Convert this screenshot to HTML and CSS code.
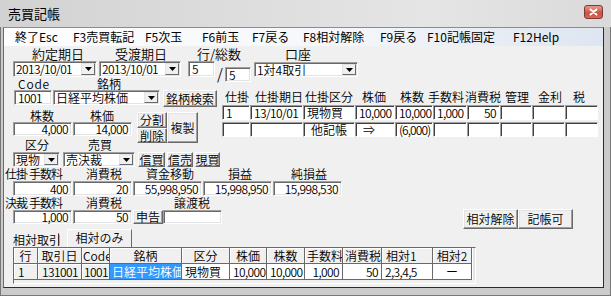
FILE: index.html
```html
<!DOCTYPE html>
<html lang="ja">
<head>
<meta charset="utf-8">
<title>売買記帳</title>
<link rel="stylesheet" href="styles.css">
</head>
<body>
<div class="window">
  <div class="titlebar">
    <span class="title">売買記帳</span>
    <span class="close"><svg width="9" height="8" viewBox="0 0 9 8"><path d="M1.5 1.5 L7.5 6.5 M7.5 1.5 L1.5 6.5" stroke="#fff" stroke-width="2" stroke-linecap="round"/></svg></span>
  </div>
  <div class="frame">
    <div class="client">
      <div class="menubar">
        <span class="mi w58">終了Esc</span>
        <span class="mi w72">F3売買転記</span>
        <span class="mi w57">F5次玉</span>
        <span class="mi w50">F6前玉</span>
        <span class="mi w51">F7戻る</span>
        <span class="mi w77">F8相対解除</span>
        <span class="mi w47">F9戻る</span>
        <span class="mi w86">F10記帳固定</span>
        <span class="mi">F12Help</span>
      </div>

      <div class="form">
      <div class="row-a">
        <span class="la w83">約定期日</span><span class="la w82">受渡期日</span><span class="la w88">行/総数</span><span class="la">口座</span>
      </div>

      <div class="row-b">
        <div class="combo c-date1"><span class="ctext n">2013/10/01</span><span class="dd"><svg width="7" height="4" viewBox="0 0 7 4"><path d="M0 0H7L3.5 4Z"/></svg></span></div>
        <div class="combo c-date2"><span class="ctext n">2013/10/01</span><span class="dd"><svg width="7" height="4" viewBox="0 0 7 4"><path d="M0 0H7L3.5 4Z"/></svg></span></div>
        <div class="field f-row">5</div>
        <span class="slash">/</span>
        <div class="field f-total">5</div>
        <div class="combo c-acct"><span class="ctext">1対4取引</span><span class="dd"><svg width="7" height="4" viewBox="0 0 7 4"><path d="M0 0H7L3.5 4Z"/></svg></span></div>
      </div>

      <div class="mid">
        <div class="left-col">
          <div class="row-c"><span class="lb code-l">Code</span><span class="lb">銘柄</span></div>
          <div class="row-d">
            <div class="field n f-code">1001</div>
            <div class="combo c-name"><span class="ctext">日経平均株価</span><span class="dd"><svg width="7" height="4" viewBox="0 0 7 4"><path d="M0 0H7L3.5 4Z"/></svg></span></div>
            <div class="btn b-search">銘柄検索</div>
          </div>
          <div class="ef">
            <div class="ef-left">
              <div class="row-e"><span class="lb w60">株数</span><span class="lb">株価</span></div>
              <div class="row-f"><div class="field n num w59">4,000</div><div class="field n num w59 ml1">14,000</div></div>
              <div class="row-g"><span class="lb w63">区分</span><span class="lb">売買</span></div>
            </div>
            <div class="ef-btns">
              <div class="btn">分割</div>
              <div class="btn b-dup">複製</div>
              <div class="btn">削除</div>
            </div>
          </div>
          <div class="row-h">
            <div class="combo c-kind"><span class="ctext">現物</span><span class="dd"><svg width="7" height="4" viewBox="0 0 7 4"><path d="M0 0H7L3.5 4Z"/></svg></span></div>
            <div class="combo c-trade"><span class="ctext">売決裁</span><span class="dd"><svg width="7" height="4" viewBox="0 0 7 4"><path d="M0 0H7L3.5 4Z"/></svg></span></div>
            <div class="btn b-s1">信買</div>
            <div class="btn b-s2">信売</div>
            <div class="btn b-s3">現買</div>
          </div>
        </div>

        <div class="right-col">
          <div class="t-head">
            <span class="th w30">仕掛</span><span class="th w50">仕掛期日</span><span class="th w57">仕掛区分</span><span class="th w38">株価</span><span class="th w28">株数</span><span class="th w37">手数料</span><span class="th w40">消費税</span><span class="th w33">管理</span><span class="th w35">金利</span><span class="th">税</span>
          </div>
          <div class="t-row">
            <div class="tc n">1</div>
            <div class="tc n">13/10/01</div>
            <div class="tc">現物買</div>
            <div class="tc n num">10,000</div>
            <div class="tc n num">10,000</div>
            <div class="tc n num">1,000</div>
            <div class="tc n num">50</div>
            <div class="tc"></div>
            <div class="tc"></div>
            <div class="tc"></div>
          </div>
          <div class="t-row">
            <div class="tc"></div>
            <div class="tc"></div>
            <div class="tc ctr">他記帳</div>
            <div class="tc pl7">⇒</div>
            <div class="tc n tight">(6,000)</div>
            <div class="tc"></div>
            <div class="tc"></div>
            <div class="tc"></div>
            <div class="tc"></div>
            <div class="tc"></div>
          </div>
        </div>
      </div>

      <div class="row-i">
        <span class="lb sm w24">仕掛</span><span class="lb sm w57">手数料</span><span class="lb w60">消費税</span><span class="lb w82">資金移動</span><span class="lb w63">損益</span><span class="lb">純損益</span>
      </div>
      <div class="row-j">
        <div class="field n num w59">400</div>
        <div class="field n num w59 ml1">20</div>
        <div class="field n num w69 ml1">55,998,950</div>
        <div class="field n num w69 ml1">15,998,950</div>
        <div class="field n num w69 ml1">15,998,530</div>
      </div>
      <div class="row-k">
        <span class="lb sm w24">決裁</span><span class="lb sm w57">手数料</span><span class="lb w88">消費税</span><span class="lb">譲渡税</span>
      </div>
      <div class="row-l">
        <div class="field n num w59">1,000</div>
        <div class="field n num w59 ml1">50</div>
        <div class="btn b-report">申告</div>
        <div class="field w59"></div>
        <div class="btn b-rel">相対解除</div>
        <div class="btn b-ok">記帳可</div>
      </div>

      <div class="row-m">
        <span class="tab-lbl">相対取引</span>
        <span class="tab">相対のみ</span>
      </div>

      <div class="grid">
        <div class="gh">行</div>
        <div class="gh">取引日</div>
        <div class="gh clip">Code</div>
        <div class="gh">銘柄</div>
        <div class="gh">区分</div>
        <div class="gh">株価</div>
        <div class="gh">株数</div>
        <div class="gh">手数料</div>
        <div class="gh">消費税</div>
        <div class="gh gl">相対1</div>
        <div class="gh">相対2</div>
        <div class="gx"></div>

        <div class="gh gl n">1</div>
        <div class="gh gr n">131001</div>
        <div class="gh gr n">1001</div>
        <div class="gd sel">日経平均株価</div>
        <div class="gd">現物買</div>
        <div class="gd gr n">10,000</div>
        <div class="gd gr n">10,000</div>
        <div class="gd gr n">1,000</div>
        <div class="gd gr n">50</div>
        <div class="gd n">2,3,4,5</div>
        <div class="gd gc">ー</div>
        <div class="gx"></div>
      </div>
      </div>
    </div>
  </div>
</div>
</body>
</html>
```
FILE: styles.css
```css
* { box-sizing: border-box; margin: 0; padding: 0; }

body {
  margin: 0;
  width: 611px;
  height: 296px;
  overflow: hidden;
  font-family: "Noto Sans CJK JP", "Noto Sans", sans-serif;
  font-size: 12px;
  color: #000;
  background: #c6c6c6;
}

.window {
  width: 611px;
  height: 296px;
  display: flex;
  flex-direction: column;
  background: #c6c6c6;
}

/* title bar */
.titlebar {
  height: 27px;
  flex: none;
  display: flex;
  align-items: flex-start;
  background: linear-gradient(to right, #d2d2d2 0%, #dcdcdc 35%, #e5e5e5 70%, #dadada 100%);
}
.title {
  margin: 5px 0 0 8px;
  font-size: 13px;
  line-height: 17px;
}
.close {
  margin: 5px 8px 0 auto;
  width: 19px;
  height: 14px;
  border: 1px solid #7e3a33;
  border-radius: 3px;
  background: linear-gradient(#e59a8f, #c9503f 60%, #d46a5c);
  display: flex;
  align-items: center;
  justify-content: center;
}

/* frame + client */
.frame {
  flex: 1;
  padding: 0 6px 7px 2px;
  border: 1px solid #777;
  border-top: none;
  background: #cbcbcb;
}
.client {
  height: 261px;
  border: 1px solid #2b2b2b;
  border-left-color: #6a6a6a;
  border-top-color: #8c8c8c;
  background: #f0f0f0;
  display: flex;
  flex-direction: column;
  overflow: hidden;
}
.form {
  display: flex;
  flex-direction: column;
  font-weight: 350;
}

/* menu */
.menubar {
  height: 18px;
  flex: none;
  display: flex;
  padding-left: 11px;
  line-height: 18px;
  font-size: 12px;
  background: linear-gradient(to right, #fdfdfe 0%, #f5f7fa 55%, #dfe6f1 100%);
}
.mi { white-space: nowrap; }

/* widths */
.w24 { width: 24px; flex: none; }
.w28 { width: 28px; flex: none; }
.w30 { width: 30px; flex: none; }
.w33 { width: 33px; flex: none; }
.w35 { width: 35px; flex: none; }
.w37 { width: 37px; flex: none; }
.w38 { width: 38px; flex: none; }
.w40 { width: 40px; flex: none; }
.w47 { width: 47px; flex: none; }
.w50 { width: 50px; flex: none; }
.w51 { width: 51px; flex: none; }
.w57 { width: 57px; flex: none; }
.w58 { width: 58px; flex: none; }
.w59 { width: 59px; flex: none; }
.w60 { width: 60px; flex: none; }
.w63 { width: 63px; flex: none; }
.w69 { width: 69px; flex: none; }
.w72 { width: 72px; flex: none; }
.w77 { width: 77px; flex: none; }
.w82 { width: 82px; flex: none; }
.w83 { width: 83px; flex: none; }
.w86 { width: 86px; flex: none; }
.w88 { width: 88px; flex: none; }
.ml1 { margin-left: 1px; }

/* narrow digits, like the bitmap UI font */
.n { letter-spacing: -0.6px; }
.tight { letter-spacing: -0.9px; }
.sm { letter-spacing: -1px; }

/* generic controls */
.lb { white-space: nowrap; display: inline-block; }

.field {
  height: 15px;
  background: #fff;
  border: 1px solid;
  border-color: #a0a0a0 #fff #fff #a0a0a0;
  box-shadow: inset 1px 1px 0 #696969, inset -1px -1px 0 #e3e3e3;
  line-height: 13px;
  padding: 0 3px;
  white-space: nowrap;
}
.num { text-align: right; }

.btn {
  background: #f0f0f0;
  border: 1px solid;
  border-color: #fff #696969 #696969 #fff;
  box-shadow: inset -1px -1px 0 #a0a0a0, inset 1px 1px 0 #e3e3e3;
  display: flex;
  align-items: center;
  justify-content: center;
  white-space: nowrap;
  line-height: 12px;
}

.combo {
  display: flex;
  height: 16px;
  background: #fff;
  border: 1px solid;
  border-color: #a0a0a0 #fff #fff #a0a0a0;
  box-shadow: inset 1px 1px 0 #696969, inset -1px -1px 0 #e3e3e3;
  padding: 1px;
  flex: none;
}
.ctext {
  flex: 1;
  line-height: 12px;
  padding-left: 1px;
  white-space: nowrap;
}
.dd {
  width: 14px;
  flex: none;
  background: #f0f0f0;
  border: 1px solid;
  border-color: #e3e3e3 #696969 #696969 #e3e3e3;
  display: flex;
  align-items: center;
  justify-content: center;
}

/* row A: labels */
.row-a {
  height: 14px;
  margin-top: 1px;
  padding-left: 28px;
  display: flex;
  font-size: 13px;
  line-height: 14px;
  flex: none;
}
.la { white-space: nowrap; }

/* row B */
.row-b {
  height: 16px;
  padding-left: 9px;
  display: flex;
  align-items: flex-start;
  flex: none;
}
.c-date1 { width: 84px; }
.c-date2 { width: 82px; margin-left: 2px; }
.f-row { width: 27px; height: 16px; margin-left: 7px; padding-left: 3px; flex: none; }
.slash {
  width: 10px;
  flex: none;
  font-size: 15px;
  line-height: 16px;
  margin-top: 5px;
  text-align: center;
}
.f-total { width: 26px; margin-top: 6px; flex: none; }
.c-acct { width: 104px; height: 15px; margin-left: 3px; margin-top: 1px; }
.c-acct .ctext { line-height: 11px; }

/* middle section */
.mid {
  display: flex;
  flex: none;
  height: 89px;
}
.left-col {
  width: 217px;
  flex: none;
}
.row-c {
  height: 13px;
  padding-left: 14px;
  display: flex;
  line-height: 13px;
}
.code-l { width: 79px; letter-spacing: 0.8px; }
.row-d {
  height: 17px;
  padding-left: 10px;
  display: flex;
  align-items: flex-start;
}
.f-code { width: 38px; flex: none; }
.c-name { width: 107px; height: 15px; margin-left: 1px; }
.c-name .ctext { line-height: 11px; }
.b-search { width: 54px; height: 17px; margin-left: 3px; flex: none; }

.ef { display: flex; height: 44px; }
.ef-left { width: 128px; padding-left: 9px; flex: none; }
.row-e {
  height: 15px;
  padding-top: 2px;
  padding-left: 17px;
  display: flex;
  line-height: 13px;
}
.row-f { display: flex; height: 14px; }
.row-f .field { height: 14px; line-height: 12px; }
.row-g {
  height: 13px;
  margin-top: 2px;
  padding-left: 12px;
  display: flex;
  line-height: 13px;
}
.ef-btns {
  margin-left: 5px;
  margin-top: 5px;
  display: grid;
  grid-template-columns: 30px 31px;
  grid-template-rows: 16px 15px;
}
.b-dup { grid-column: 2; grid-row: 1 / span 2; }

.row-h {
  height: 15px;
  margin-top: 1px;
  padding-left: 9px;
  display: flex;
}
.row-h .combo { height: 15px; }
.row-h .ctext { line-height: 11px; }
.c-kind { width: 47px; }
.c-trade { width: 72px; margin-left: 3px; }
.b-s1 { width: 27px; margin-left: 3px; }
.b-s2 { width: 26px; margin-left: 2px; }
.b-s3 { width: 25px; margin-left: 2px; }

.right-col {
  margin-left: 1px;
  padding-top: 13px;
}
.t-head {
  height: 15px;
  padding-left: 3px;
  display: flex;
  line-height: 14px;
}
.th { white-space: nowrap; }
.t-row {
  display: grid;
  grid-template-columns: 28px 53px 52px 40px 38px 34px 33px 32px 33px 33px;
  height: 15px;
}
.t-row + .t-row { margin-top: 2px; }
.tc {
  background: #fff;
  border: 1px solid;
  border-color: #a0a0a0 #fff #fff #a0a0a0;
  box-shadow: inset 1px 1px 0 #404040;
  line-height: 13px;
  padding: 0 3px;
  white-space: nowrap;
}
.pl7 { padding-left: 7px; }
.ctr { text-align: center; }

/* lower rows */
.row-i {
  height: 13px;
  margin-top: 1px;
  padding-left: 1px;
  display: flex;
  line-height: 13px;
  flex: none;
}
.row-j {
  height: 15px;
  margin-top: 1px;
  padding-left: 9px;
  display: flex;
  flex: none;
}
.row-k {
  height: 14px;
  padding-left: 1px;
  display: flex;
  line-height: 14px;
  flex: none;
}
.row-l {
  height: 19px;
  padding-left: 9px;
  padding-right: 30px;
  display: flex;
  align-items: flex-start;
  flex: none;
}
.row-l .field { height: 14px; line-height: 12px; }
.b-report { width: 30px; height: 14px; margin-left: 1px; flex: none; }
.b-rel { width: 55px; height: 20px; margin-left: auto; margin-top: -1px; flex: none; }
.b-ok { width: 55px; height: 20px; margin-top: -1px; flex: none; }

.row-m {
  height: 18px;
  padding-left: 9px;
  display: flex;
  align-items: flex-end;
  flex: none;
}
.tab-lbl {
  width: 46px;
  height: 13px;
  line-height: 13px;
  margin-bottom: 1px;
  border-right: 1px solid #696969;
  white-space: nowrap;
}
.tab {
  width: 65px;
  height: 18px;
  margin-left: 8px;
  background: #f0f0f0;
  border: 1px solid;
  border-bottom: none;
  border-color: #fff #696969 transparent #fff;
  text-align: center;
  line-height: 16px;
}

/* grid */
.grid {
  margin-left: 9px;
  width: 463px;
  height: 37px;
  flex: none;
  display: grid;
  grid-template-columns: 24px 44px 28px 72px 48px 37px 38px 38px 39px 51px 39px 1fr;
  grid-template-rows: 16px 16px;
  border: 1px solid;
  border-color: #696969 #fff #fff #696969;
  background: #f0f0f0;
}
.gh {
  background: #f0f0f0;
  border-right: 1px solid #696969;
  border-bottom: 1px solid #696969;
  box-shadow: inset 1px 1px 0 #fff;
  text-align: center;
  line-height: 15px;
  white-space: nowrap;
  overflow: hidden;
  padding: 0 2px;
}
.gd {
  background: #fff;
  border-right: 1px solid #696969;
  border-bottom: 1px solid #696969;
  line-height: 15px;
  white-space: nowrap;
  overflow: hidden;
  padding: 0 3px;
}
.gl { text-align: left; padding-left: 4px; }
.gr { text-align: right; padding-right: 3px; }
.gc { text-align: center; }
.clip { text-align: left; padding-left: 1px; }
.sel { background: #3399ff; color: #fff; padding-left: 2px; }
.gx {
  background: #e3e3e3;
  border-left: 1px solid #fff;
}
```
